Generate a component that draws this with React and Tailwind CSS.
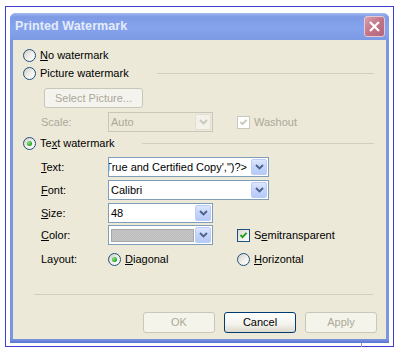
import React from "react";

function Radio({ checked }) {
  return (
    <span className="w-[13px] h-[13px] shrink-0 rounded-full border border-[#1c5180] bg-[linear-gradient(135deg,#d2d0c4_0%,#f1f0ea_55%,#ffffff_100%)] flex items-center justify-center">
      {checked && (
        <span className="w-[5px] h-[5px] rounded-full bg-[radial-gradient(circle_at_35%_35%,#8ee68a,#21a121_70%)]" />
      )}
    </span>
  );
}

function Checkbox({ disabled }) {
  return (
    <span
      className={
        disabled
          ? "w-[13px] h-[13px] shrink-0 border border-[#cac8bb] bg-white flex items-center justify-center"
          : "w-[13px] h-[13px] shrink-0 border border-[#1c5180] bg-[linear-gradient(135deg,#dcdad0,#ffffff)] flex items-center justify-center"
      }
    >
      <svg width="9" height="9" viewBox="0 0 9 9">
        <path
          d="M1.5 4 L3.5 6.2 L7.6 1.8"
          fill="none"
          stroke={disabled ? "#cac8bb" : "#21a121"}
          strokeWidth="1.9"
        />
      </svg>
    </span>
  );
}

function Chevron({ color }) {
  return (
    <svg width="9" height="6" viewBox="0 0 9 6">
      <path d="M1 1 L4.5 4.5 L8 1" fill="none" stroke={color} strokeWidth="1.8" />
    </svg>
  );
}

function DropBtn({ disabled }) {
  return disabled ? (
    <span className="w-[16px] m-px rounded-[2px] border border-[#e2dfd3] bg-[#f3f2ea] flex items-center justify-center">
      <Chevron color="#c9c7ba" />
    </span>
  ) : (
    <span className="w-[16px] m-px rounded-[2px] border border-[#bccdf5] bg-[linear-gradient(180deg,#dde7fe_0%,#c5d6fc_45%,#b6caf8_100%)] flex items-center justify-center">
      <Chevron color="#4d6185" />
    </span>
  );
}

export default function App() {
  return (
    <div className="w-[400px] h-[353px] bg-white overflow-hidden pt-[6px] pl-[5px] font-['Liberation_Sans',Arial,sans-serif] text-[11px] text-black leading-none">
      <div className="w-[389px] h-[341px] border border-[#3c3cd0] pt-[6px] pl-[4px]">
        <div className="w-[379px] h-[330px] flex flex-col rounded-t-[6px] overflow-hidden bg-[#7a96df]">
          {/* Title bar */}
          <div className="h-[27px] shrink-0 flex items-center justify-between pl-[5px] pr-[4px] bg-[linear-gradient(180deg,#a3b9f0_0%,#7e9ae5_14%,#86a4ed_55%,#7c99e4_100%)]">
            <span className="text-[12.5px] font-bold text-[#e4ecfb] tracking-[0.1px]">
              Printed Watermark
            </span>
            <span className="w-[21px] h-[21px] rounded-[3px] border border-[#e7c9d3] bg-[linear-gradient(135deg,#d9a1b0_0%,#c27487_50%,#b3667b_100%)] flex items-center justify-center">
              <svg width="13" height="13" viewBox="0 0 13 13">
                <path d="M2 2 L11 11 M11 2 L2 11" stroke="#ffffff" strokeWidth="2.2" />
              </svg>
            </span>
          </div>

          {/* Body */}
          <div className="h-[299px] shrink-0 mx-[3px] bg-[#ece9d8] flex flex-col pl-[10px] pr-[12px] pt-[6px]">
            <div className="h-[18px] flex items-center gap-[4px]">
              <Radio />
              <span>
                <span className="underline underline-offset-[1px]">N</span>o watermark
              </span>
            </div>

            <div className="h-[18px] flex items-center gap-[4px]">
              <Radio />
              <span className="w-[117px] shrink-0">Picture watermark</span>
              <span className="flex-1 h-px bg-[#d0cebf] -ml-[4px]" />
            </div>

            <div className="mt-[6px] ml-[21px] w-[99px] h-[20px] rounded-[3px] border border-[#c9c7ba] bg-[#f4f3ee] text-[#aca899] flex items-center justify-center">
              Select Picture...
            </div>

            <div className="mt-[4px] h-[20px] flex items-center pl-[18px]">
              <span className="w-[67px] shrink-0 text-[#aca899]">Scale:</span>
              <div className="w-[105px] h-[20px] shrink-0 border border-[#c9c7ba] bg-[#ece9d8] flex items-stretch">
                <span className="flex-1 pl-[2px] flex items-center text-[#aca899]">Auto</span>
                <DropBtn disabled />
              </div>
              <span className="ml-[24px] flex items-center gap-[4px] text-[#aca899]">
                <Checkbox disabled />
                Washout
              </span>
            </div>

            <div className="mt-[2px] h-[18px] flex items-center gap-[4px]">
              <Radio checked />
              <span className="w-[102px] shrink-0">
                Te<span className="underline underline-offset-[1px]">x</span>t watermark
              </span>
              <span className="flex-1 h-px bg-[#d0cebf] -ml-[4px]" />
            </div>

            <div className="mt-[5px] h-[20px] flex items-center pl-[18px]">
              <span className="w-[67px] shrink-0">
                <span className="underline underline-offset-[1px]">T</span>ext:
              </span>
              <div className="w-[161px] h-[20px] shrink-0 border border-[#7f9db9] bg-white flex items-stretch">
                <span className="flex-1 min-w-0 overflow-hidden whitespace-nowrap flex items-center justify-end pr-[3px]">
                  <span className="shrink-0">True and Certified Copy',")?&gt;</span>
                </span>
                <DropBtn />
              </div>
            </div>

            <div className="mt-[3px] h-[20px] flex items-center pl-[18px]">
              <span className="w-[67px] shrink-0">
                <span className="underline underline-offset-[1px]">F</span>ont:
              </span>
              <div className="w-[161px] h-[20px] shrink-0 border border-[#7f9db9] bg-white flex items-stretch">
                <span className="flex-1 pl-[2px] flex items-center">Calibri</span>
                <DropBtn />
              </div>
            </div>

            <div className="mt-[3px] h-[20px] flex items-center pl-[18px]">
              <span className="w-[67px] shrink-0">
                <span className="underline underline-offset-[1px]">S</span>ize:
              </span>
              <div className="w-[105px] h-[20px] shrink-0 border border-[#7f9db9] bg-white flex items-stretch">
                <span className="flex-1 pl-[2px] flex items-center">48</span>
                <DropBtn />
              </div>
            </div>

            <div className="mt-[2px] h-[20px] flex items-center pl-[18px]">
              <span className="w-[67px] shrink-0">
                <span className="underline underline-offset-[1px]">C</span>olor:
              </span>
              <div className="w-[105px] h-[20px] shrink-0 border border-[#7f9db9] bg-white flex items-stretch">
                <span className="flex-1 pl-[2px] flex items-center">
                  <span className="w-[83px] h-[13px] border border-[#a8a8a8] bg-[repeating-conic-gradient(#bababa_0_25%,#cacaca_0_50%)] bg-[length:2px_2px]" />
                </span>
                <DropBtn />
              </div>
              <span className="ml-[24px] flex items-center gap-[4px]">
                <Checkbox />
                <span>
                  S<span className="underline underline-offset-[1px]">e</span>mitransparent
                </span>
              </span>
            </div>

            <div className="mt-[5px] h-[18px] flex items-center pl-[18px]">
              <span className="w-[67px] shrink-0">Layout:</span>
              <span className="w-[129px] shrink-0 flex items-center gap-[4px]">
                <Radio checked />
                <span>
                  <span className="underline underline-offset-[1px]">D</span>iagonal
                </span>
              </span>
              <span className="flex items-center gap-[4px]">
                <Radio />
                <span>
                  <span className="underline underline-offset-[1px]">H</span>orizontal
                </span>
              </span>
            </div>

            <div className="mt-[26px] ml-[11px] mr-[1px] h-px bg-[#d0cebf]" />

            <div className="mt-[17px] ml-[120px] flex gap-[9px] w-max">
              <span className="w-[72px] h-[21px] rounded-[3px] border border-[#c9c7ba] bg-[#f5f4ea] text-[#aca899] flex items-center justify-center">
                OK
              </span>
              <span className="w-[72px] h-[21px] rounded-[3px] border border-[#003c74] bg-[linear-gradient(180deg,#ffffff_0%,#f3f2ec_60%,#dcd8cc_100%)] flex items-center justify-center">
                Cancel
              </span>
              <span className="w-[72px] h-[21px] rounded-[3px] border border-[#c9c7ba] bg-[#f5f4ea] text-[#aca899] flex items-center justify-center">
                Apply
              </span>
            </div>
          </div>

          <div className="flex-1 bg-[linear-gradient(180deg,#7a96df,#5d74d4)]" />
        </div>
        <div className="ml-[351px] w-px h-[4px] bg-[#9a9a9a]" />
      </div>
    </div>
  );
}
